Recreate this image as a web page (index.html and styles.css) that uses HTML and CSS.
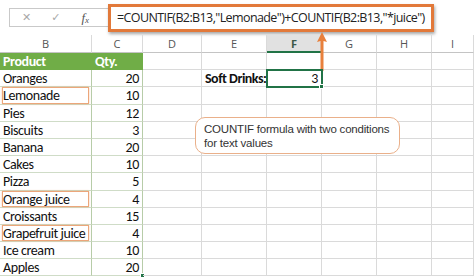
FILE: index.html
```html
<!doctype html>
<html lang="en">
<head>
    <meta charset="UTF-8">
    <title>COUNTIF with two conditions</title>
    <link rel="stylesheet" href="styles.css">
</head>
<body>
    <!-- Formula bar -->
    <div class="topbar">
        <div class="fxbox">
            <span class="ico x">&#x2715;</span>
            <span class="ico ok">&#x2713;</span>
            <span class="ico fx">f<sub>x</sub></span>
        </div>
        <div class="formula">=COUNTIF(B2:B13,"Lemonade")+COUNTIF(B2:B13,"*juice")</div>
    </div>

    <!-- Sheet -->
    <div class="sheet">
        <div class="hd">B</div><div class="hd">C</div><div class="hd">D</div><div class="hd">E</div><div class="hd cur">F</div><div class="hd">G</div><div class="hd">H</div><div class="hd">I</div>

        <div class="c g">Product</div><div class="c g">Qty.</div><div class="c"></div><div class="c"></div><div class="c"></div><div class="c"></div><div class="c"></div><div class="c"></div>
        <div class="c t">Oranges</div><div class="c t n">20</div><div class="c"></div><div class="c label">Soft Drinks:</div><div class="c n sel">3<span class="handle"></span></div><div class="c"></div><div class="c"></div><div class="c"></div>
        <div class="c t hl">Lemonade</div><div class="c t n">10</div><div class="c"></div><div class="c"></div><div class="c"></div><div class="c"></div><div class="c"></div><div class="c"></div>
        <div class="c t">Pies</div><div class="c t n">12</div><div class="c"></div><div class="c"></div><div class="c"></div><div class="c"></div><div class="c"></div><div class="c"></div>
        <div class="c t">Biscuits</div><div class="c t n">3</div><div class="c"></div><div class="c"></div><div class="c"></div><div class="c"></div><div class="c"></div><div class="c"></div>
        <div class="c t">Banana</div><div class="c t n">20</div><div class="c"></div><div class="c"></div><div class="c"></div><div class="c"></div><div class="c"></div><div class="c"></div>
        <div class="c t">Cakes</div><div class="c t n">10</div><div class="c"></div><div class="c"></div><div class="c"></div><div class="c"></div><div class="c"></div><div class="c"></div>
        <div class="c t">Pizza</div><div class="c t n">5</div><div class="c"></div><div class="c"></div><div class="c"></div><div class="c"></div><div class="c"></div><div class="c"></div>
        <div class="c t hl">Orange juice</div><div class="c t n">4</div><div class="c"></div><div class="c"></div><div class="c"></div><div class="c"></div><div class="c"></div><div class="c"></div>
        <div class="c t">Croissants</div><div class="c t n">15</div><div class="c"></div><div class="c"></div><div class="c"></div><div class="c"></div><div class="c"></div><div class="c"></div>
        <div class="c t hl">Grapefruit juice</div><div class="c t n">4</div><div class="c"></div><div class="c"></div><div class="c"></div><div class="c"></div><div class="c"></div><div class="c"></div>
        <div class="c t">Ice cream</div><div class="c t n">10</div><div class="c"></div><div class="c"></div><div class="c"></div><div class="c"></div><div class="c"></div><div class="c"></div>
        <div class="c t">Apples</div><div class="c t n">20<span class="handle"></span></div><div class="c"></div><div class="c"></div><div class="c"></div><div class="c"></div><div class="c"></div><div class="c"></div>
    </div>

    <!-- Arrow from result cell to formula -->
    <svg class="arrow" width="12" height="40" viewBox="0 0 12 40">
        <path d="M6 1 L11 11 L7.5 10 L7.5 40 L4.5 40 L4.5 10 L1 11 Z" fill="#e8803c"/>
    </svg>

    <!-- Callout -->
    <div class="callout">COUNTIF formula with two conditions<br>for text values</div>
</body>
</html>
```

FILE: styles.css
```css
body {
    margin: 0;
    width: 474px;
    height: 277px;
    overflow: hidden;
    position: relative;
    background: #fff;
    font-family: Carlito, "Open Sans", sans-serif;
    color: #111;
}
.topbar {
    height: 35px;
    display: flex;
    align-items: center;
}
.fxbox {
    margin-left: 9px;
    width: 99px;
    height: 19px;
    box-sizing: border-box;
    border: 1px solid #c9c9c9;
    border-right: none;
    display: flex;
    align-items: center;
}
.ico {
    color: #a8a8a8;
    font-family: "DejaVu Sans", sans-serif;
    font-size: 11px;
}
.x { margin-left: 12px; }
.ok { margin-left: 20px; }
.fx {
    margin-left: 21px;
    font-family: "Liberation Serif", serif;
    font-style: italic;
    font-size: 13px;
    color: #555;
}
.fx sub {
    font-size: 9px;
    vertical-align: -1px;
}
.formula {
    width: 326px;
    height: 28px;
    box-sizing: border-box;
    border: 3px solid #e2793a;
    box-shadow: 1px 2px 3px rgba(0, 0, 0, 0.35);
    display: flex;
    align-items: center;
    padding-left: 6px;
    font-family: "Open Sans", sans-serif;
    font-size: 12.5px;
    letter-spacing: -0.6px;
    color: #222;
    white-space: nowrap;
}
.sheet {
    display: grid;
    grid-template-columns: 92px 51px 59px 65px 55px 55px 55px 42px;
    grid-template-rows: 18px repeat(13, 17.2px);
}
.sheet > div {
    box-sizing: border-box;
    border-right: 1px solid #dadada;
    border-bottom: 1px solid #dadada;
    white-space: nowrap;
    overflow: visible;
    position: relative;
}
.hd {
    text-align: center;
    font-family: "Open Sans", sans-serif;
    font-size: 11px;
    line-height: 17px;
    color: #555;
    border-bottom-color: #c4c4c4 !important;
}
.hd.cur {
    background: #e1e1e1;
    border-bottom: 2px solid #217346 !important;
    font-weight: bold;
    color: #3c5a48;
}
.c {
    font-size: 14px;
    letter-spacing: -0.4px;
    line-height: 17px;
    padding: 0 3px;
}
.c.t {
    border-bottom-color: #cfdcc7;
    border-right-color: #b7cca8;
}
.c.g {
    background: #70ad47;
    color: #fff;
    font-weight: bold;
    border-color: #70ad47;
}
.n {
    text-align: right;
}
.label {
    font-weight: bold;
    text-align: right;
    padding-right: 3px;
    letter-spacing: -0.5px;
}
.hl::after {
    content: "";
    position: absolute;
    left: 2px;
    top: 0;
    right: 2px;
    bottom: 0;
    border: 1px solid #eca67a;
    box-shadow: 0 0 2px rgba(232, 128, 60, 0.4);
}
.sel {
    outline: 2px solid #217346;
    outline-offset: -1px;
    z-index: 1;
}
.handle {
    position: absolute;
    right: -3px;
    bottom: -3px;
    width: 5px;
    height: 5px;
    background: #217346;
    border: 1px solid #fff;
    box-sizing: border-box;
}
.arrow {
    position: absolute;
    left: 316px;
    top: 31px;
}
.callout {
    position: absolute;
    left: 195px;
    top: 117px;
    width: 205px;
    height: 37px;
    box-sizing: border-box;
    padding: 4px 8px;
    background: #fff;
    border: 1px solid #eab08a;
    border-radius: 10px;
    font-family: "Liberation Sans", Arial, sans-serif;
    font-size: 11.5px;
    line-height: 14px;
    color: #333;
    letter-spacing: -0.2px;
}
```
